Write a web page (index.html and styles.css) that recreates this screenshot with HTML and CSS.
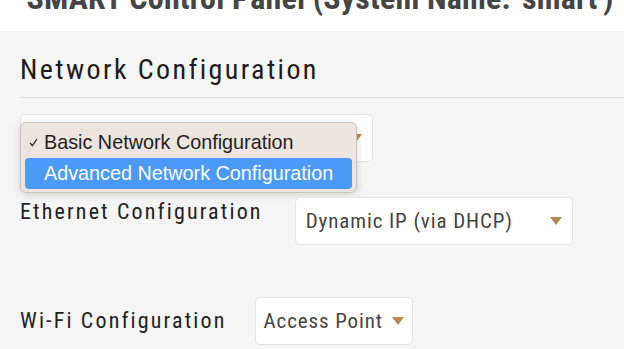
FILE: index.html
```html
<!DOCTYPE html>
<html lang="en">
<head>
  <meta charset="UTF-8" />
  <title>SMART Control Panel - Network</title>
  <link rel="stylesheet" href="styles.css">
</head>
<body>

  <div class="top_bar">
    <h1 class="panel_title">SMART Control Panel (System Name: 'smart')</h1>
  </div>

  <div class="content">
    <h2 class="section_title">Network Configuration</h2>

    <div class="form_row">
      <div class="fake_select select_mode">
        <span class="select_text"></span>
        <span class="select_arrow"></span>
      </div>

      <div class="menu_popup">
        <div class="menu_item">
          <svg class="check_mark" width="9" height="9" viewBox="0 0 9 9">
            <polyline points="1,4.8 3.4,7.6 8,1" fill="none" stroke="#222" stroke-width="1.3" />
          </svg>
          Basic Network Configuration
        </div>
        <div class="menu_item active">Advanced Network Configuration</div>
      </div>
    </div>

    <div class="form_row row_eth">
      <label class="field_label">Ethernet Configuration</label>
      <div class="fake_select select_eth">
        <span class="select_text">Dynamic IP (via DHCP)</span>
        <span class="select_arrow"></span>
      </div>
    </div>

    <div class="form_row row_wifi">
      <label class="field_label">Wi-Fi Configuration</label>
      <div class="fake_select select_wifi">
        <span class="select_text">Access Point</span>
        <span class="select_arrow"></span>
      </div>
    </div>
  </div>

</body>
</html>
```
FILE: styles.css
```css
body {
  margin: 0;
  padding: 0;
  background-color: #f5f5f5;
  font-family: "Roboto Condensed", "DejaVu Sans Condensed", sans-serif;
  overflow: hidden;
}

.top_bar {
  background-color: white;
  height: 31px;
  overflow: hidden;
  text-align: center;
}

.panel_title {
  margin: -18px 0 0 0;
  padding-left: 16px;
  font-size: 32px;
  line-height: 32px;
  font-weight: bold;
  letter-spacing: 0.2px;
  white-space: nowrap;
  color: #454545;
}

.content {
  padding: 22px 0 0 20px;
}

.section_title {
  margin: 0;
  font-size: 28px;
  line-height: 34px;
  font-weight: normal;
  letter-spacing: 2.4px;
  color: #1c1c1c;
  padding-bottom: 10px;
  border-bottom: 1px solid #dedede;
}

.form_row {
  position: relative;
  display: flex;
  align-items: center;
  gap: 32px;
  margin-top: 16px;
}

.row_eth {
  align-items: flex-start;
  margin-top: 35px;
}

.row_wifi {
  gap: 28px;
  margin-top: 52px;
}

.field_label {
  font-size: 22px;
  line-height: 30px;
  letter-spacing: 2.15px;
  color: #222;
}

.fake_select {
  box-sizing: border-box;
  height: 48px;
  display: flex;
  align-items: center;
  justify-content: space-between;
  padding: 0 10px 0 10px;
  background: white;
  border: 1px solid #e4e4e4;
  border-radius: 5px;
}

.select_mode {
  width: 353px;
}

.select_eth {
  width: 278px;
}

.select_wifi {
  width: 158px;
  padding-left: 8px;
  padding-right: 8px;
}

.select_text {
  font-size: 21px;
  letter-spacing: 0.9px;
  color: #444;
}

.select_arrow {
  width: 0;
  height: 0;
  border-left: 6px solid transparent;
  border-right: 6px solid transparent;
  border-top: 8px solid #b38b55;
}

.menu_popup {
  position: absolute;
  top: 8px;
  left: 0;
  width: 337px;
  box-sizing: border-box;
  padding: 4px 4px 3px 4px;
  background: #ece5df;
  border: 1px solid #c9c3bd;
  border-radius: 6px;
  box-shadow: 0 2px 8px rgba(0,0,0,0.15);
  font-family: "Liberation Sans", Arial, sans-serif;
}

.menu_item {
  position: relative;
  height: 31px;
  line-height: 31px;
  padding-left: 19px;
  font-size: 19.8px;
  color: #1e1e1e;
  border-radius: 4px;
}

.menu_item.active {
  background-color: #4b9af7;
  color: white;
}

.check_mark {
  position: absolute;
  left: 4px;
  top: 11px;
}
```
